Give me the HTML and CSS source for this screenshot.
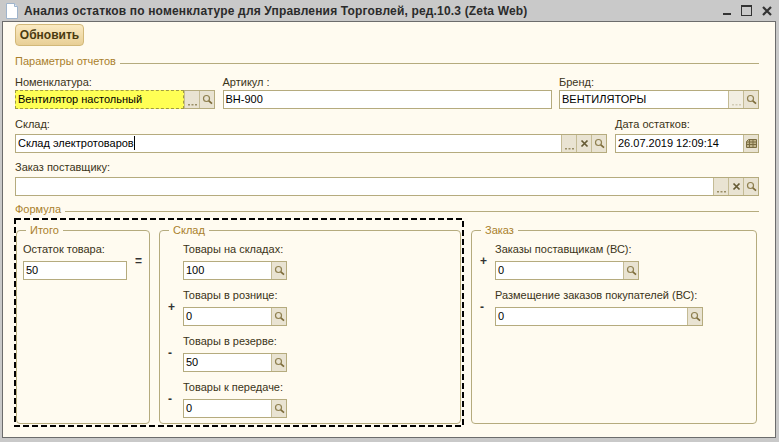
FILE: index.html
```html
<!DOCTYPE html>
<html lang="ru">
<head>
    <meta charset="UTF-8">
    <title>Анализ остатков</title>
    <link rel="stylesheet" href="styles.css">
</head>
<body>
    <svg class="sprite" width="0" height="0">
        <symbol id="i-search" viewBox="0 0 15 17">
            <circle cx="6.500" cy="7.500" r="3" fill="none" stroke="#8f8050" stroke-width="1.200"/>
            <path d="M8.800 9.800 L12 12.600" stroke="#7d6c3a" stroke-width="1.700"/>
        </symbol>
        <symbol id="i-dots" viewBox="0 0 15 17">
            <path d="M3 13h2v1.400H3zM6.500 13h2v1.400h-2zM10 13h2v1.400h-2z" fill="#9a8e66"/>
        </symbol>
        <symbol id="i-clear" viewBox="0 0 15 17">
            <path d="M4.500 5.500 L10.500 11.500 M10.500 5.500 L4.500 11.500" stroke="#655a34" stroke-width="1.700"/>
        </symbol>
        <symbol id="i-cal" viewBox="0 0 15 17">
            <path d="M4.500 4.500h8v8H2.500v-6z" fill="#c2b68c" stroke="#7a6d42"/>
            <path d="M2.500 7h10M2.500 9.500h10M5.500 4.500v8M9 4.500v8" stroke="#7a6d42" stroke-width="1"/>
        </symbol>
    </svg>

    <div class="titlebar">
        <svg class="doc-icon" width="12" height="16" viewBox="0 0 12 16">
            <path d="M.5.500h8l3 3v12H.5z" fill="#fff" stroke="#9fb4cc"/>
            <path d="M8.500.500v3h3" fill="#dce6f0" stroke="#9fb4cc"/>
        </svg>
        <span class="title">Анализ остатков по номенклатуре для Управления Торговлей, ред.10.3 (Zeta Web)</span>
        <div class="win-controls">
            <span class="win-min"></span>
            <span class="win-max"></span>
            <svg width="10" height="10" viewBox="0 0 10 10"><path d="M1 1 L9 9 M9 1 L1 9" stroke="#333" stroke-width="2.200"/></svg>
        </div>
    </div>

    <div class="window">
        <button class="refresh">Обновить</button>

        <div class="section section-params"><span>Параметры отчетов</span></div>

        <div class="row row-first">
            <div class="col w-200">
                <label>Номенклатура:</label>
                <div class="field field-active">
                    <div class="value">Вентилятор настольный</div>
                    <span class="btn"><svg><use href="#i-dots"/></svg></span>
                    <span class="btn"><svg><use href="#i-search"/></svg></span>
                </div>
            </div>
            <div class="col w-329">
                <label>Артикул :</label>
                <div class="field"><div class="value">ВН-900</div></div>
            </div>
            <div class="col w-200 brand">
                <label>Бренд:</label>
                <div class="field">
                    <div class="value">ВЕНТИЛЯТОРЫ</div>
                    <span class="btn btn-off"><svg><use href="#i-dots"/></svg></span>
                    <span class="btn"><svg><use href="#i-search"/></svg></span>
                </div>
            </div>
        </div>

        <div class="row">
            <div class="col w-592">
                <label>Склад:</label>
                <div class="field">
                    <div class="value">Склад электротоваров<i class="caret"></i></div>
                    <span class="btn"><svg><use href="#i-dots"/></svg></span>
                    <span class="btn"><svg><use href="#i-clear"/></svg></span>
                    <span class="btn"><svg><use href="#i-search"/></svg></span>
                </div>
            </div>
            <div class="col w-144">
                <label>Дата остатков:</label>
                <div class="field">
                    <div class="value">26.07.2019 12:09:14</div>
                    <span class="btn"><svg><use href="#i-cal"/></svg></span>
                </div>
            </div>
        </div>

        <div class="row row-last">
            <div class="col w-744">
                <label>Заказ поставщику:</label>
                <div class="field">
                    <div class="value"></div>
                    <span class="btn"><svg><use href="#i-dots"/></svg></span>
                    <span class="btn"><svg><use href="#i-clear"/></svg></span>
                    <span class="btn"><svg><use href="#i-search"/></svg></span>
                </div>
            </div>
        </div>

        <div class="section section-formula"><span>Формула</span></div>

        <div class="formula">
            <div class="highlight">
                <svg class="dashes" width="450" height="209">
                    <rect x="1" y="1" width="448" height="207" fill="none" stroke="#000" stroke-width="2" stroke-dasharray="6 3"/>
                </svg>

                <fieldset class="group group-total">
                    <legend>Итого</legend>
                    <div class="item">
                        <label>Остаток товара:</label>
                        <div class="field w-104"><div class="value">50</div></div>
                        <span class="sign sign-eq">=</span>
                    </div>
                </fieldset>

                <fieldset class="group group-stock">
                    <legend>Склад</legend>
                    <div class="item">
                        <label>Товары на складах:</label>
                        <div class="field w-104">
                            <div class="value">100</div>
                            <span class="btn"><svg><use href="#i-search"/></svg></span>
                        </div>
                    </div>
                    <div class="item">
                        <span class="sign">+</span>
                        <label>Товары в рознице:</label>
                        <div class="field w-104">
                            <div class="value">0</div>
                            <span class="btn"><svg><use href="#i-search"/></svg></span>
                        </div>
                    </div>
                    <div class="item">
                        <span class="sign">-</span>
                        <label>Товары в резерве:</label>
                        <div class="field w-104">
                            <div class="value">50</div>
                            <span class="btn"><svg><use href="#i-search"/></svg></span>
                        </div>
                    </div>
                    <div class="item">
                        <span class="sign">-</span>
                        <label>Товары к передаче:</label>
                        <div class="field w-104">
                            <div class="value">0</div>
                            <span class="btn"><svg><use href="#i-search"/></svg></span>
                        </div>
                    </div>
                </fieldset>
            </div>

            <fieldset class="group group-order">
                <legend>Заказ</legend>
                <div class="item">
                    <span class="sign">+</span>
                    <label>Заказы поставщикам (ВС):</label>
                    <div class="field w-144">
                        <div class="value">0</div>
                        <span class="btn"><svg><use href="#i-search"/></svg></span>
                    </div>
                </div>
                <div class="item">
                    <span class="sign">-</span>
                    <label>Размещение заказов покупателей (ВС):</label>
                    <div class="field w-208">
                        <div class="value">0</div>
                        <span class="btn"><svg><use href="#i-search"/></svg></span>
                    </div>
                </div>
            </fieldset>
        </div>
    </div>
</body>
</html>
```

FILE: styles.css
```css
* {
    box-sizing: border-box;
}

body {
    margin: 0;
    height: 442px;
    overflow: hidden;
    background: #c9c9c9;
    font-family: "Liberation Sans", Arial, sans-serif;
    font-size: 11px;
    color: #3b3418;
}

.sprite {
    display: block;
    height: 0;
}

.titlebar {
    display: flex;
    align-items: center;
    height: 21px;
    padding-left: 6px;
}

.doc-icon {
    flex: none;
    margin-right: 6px;
}

.title {
    font-weight: bold;
    font-size: 12px;
    letter-spacing: 0.17px;
    color: #2b2b2b;
}

.win-controls {
    display: flex;
    align-items: center;
    gap: 10px;
    margin-left: auto;
    padding-right: 7px;
}

.win-min {
    align-self: flex-end;
    width: 8px;
    height: 2px;
    margin-bottom: 1px;
    background: #333;
}

.win-max {
    width: 11px;
    height: 11px;
    border: 1px solid #333;
    border-top-width: 2px;
}

.window {
    width: 774px;
    height: 417px;
    margin-left: 2px;
    padding: 2px 16px 0 12px;
    background: #fffbf0;
    border: 1px solid #6c6c6c;
}

.refresh {
    display: block;
    width: 69px;
    height: 22px;
    padding: 0;
    background: linear-gradient(#fbeac2, #e8cf96);
    border: 1px solid #d2b878;
    border-radius: 4px;
    font-family: inherit;
    font-size: 12px;
    font-weight: bold;
    color: #4a3a10;
}

.section {
    display: flex;
    align-items: center;
    gap: 4px;
    height: 14px;
    color: #a97f2c;
}

.section::after {
    content: "";
    flex: 1;
    height: 1px;
    margin-top: 4px;
    background: #b5ab7e;
}

.section-params {
    margin: 8px 0 5px;
}

.row {
    display: flex;
    justify-content: space-between;
    height: 43px;
}

.row-first {
    height: 44px;
}

.row-last {
    height: 42px;
}

.col label {
    display: block;
    height: 17px;
    line-height: 15px;
}

.row-first .col label {
    padding-top: 2px;
}

.w-200 { width: 200px; }
.w-329 { width: 329px; }
.w-592 { width: 592px; }
.w-144 { width: 144px; }
.w-744 { width: 744px; }
.w-104 { width: 104px; }
.w-208 { width: 208px; }

.field {
    display: flex;
    height: 19px;
    background: #e9e3d2;
    border: 1px solid #b5ab7e;
}

.value {
    flex: 1;
    min-width: 0;
    padding-left: 2px;
    background: #fff;
    line-height: 17px;
    color: #000;
    white-space: nowrap;
}

.field-active .value {
    margin: -1px 0 -1px -1px;
    padding-left: 2px;
    background: #ffff55;
    border: 1px dashed #a09c40;
    line-height: 17px;
}

.caret {
    display: inline-block;
    width: 1px;
    height: 14px;
    vertical-align: -3px;
    background: #000;
}

.btn {
    flex: none;
    width: 15px;
    height: 17px;
    border-left: 1px solid #c4bb95;
}

.btn svg {
    display: block;
    width: 15px;
    height: 17px;
}

.btn-off svg {
    opacity: 0.35;
}

.btn-off {
    background: #f2eee2;
}

.formula {
    display: flex;
    margin-top: 2px;
    margin-left: -1px;
}

.highlight {
    position: relative;
    display: flex;
    gap: 9px;
    width: 450px;
    height: 209px;
    padding: 5px 3px 3px 2px;
}

.dashes {
    position: absolute;
    top: 0;
    left: 0;
    pointer-events: none;
}

.group {
    margin: 0;
    padding: 5px 0 0;
    border: 1px solid #b5ab7e;
    border-radius: 4px;
}

.group legend {
    margin-left: 9px;
    padding: 0 4px;
    height: 14px;
    line-height: 14px;
    color: #a97f2c;
}

.group-total {
    width: 134px;
}

.group-stock {
    width: 302px;
}

.group-order {
    width: 286px;
    height: 201px;
    margin: 5px 0 0 7px;
}

.item {
    position: relative;
    height: 46px;
    margin-left: 23px;
}

.group-total .item {
    margin-left: 6px;
}

.item label {
    display: block;
    height: 19px;
    line-height: 15px;
    white-space: nowrap;
}

.sign {
    position: absolute;
    left: -15px;
    top: 12px;
    font-size: 12px;
    font-weight: bold;
    color: #333;
}

.sign-eq {
    left: 112px;
}
```
